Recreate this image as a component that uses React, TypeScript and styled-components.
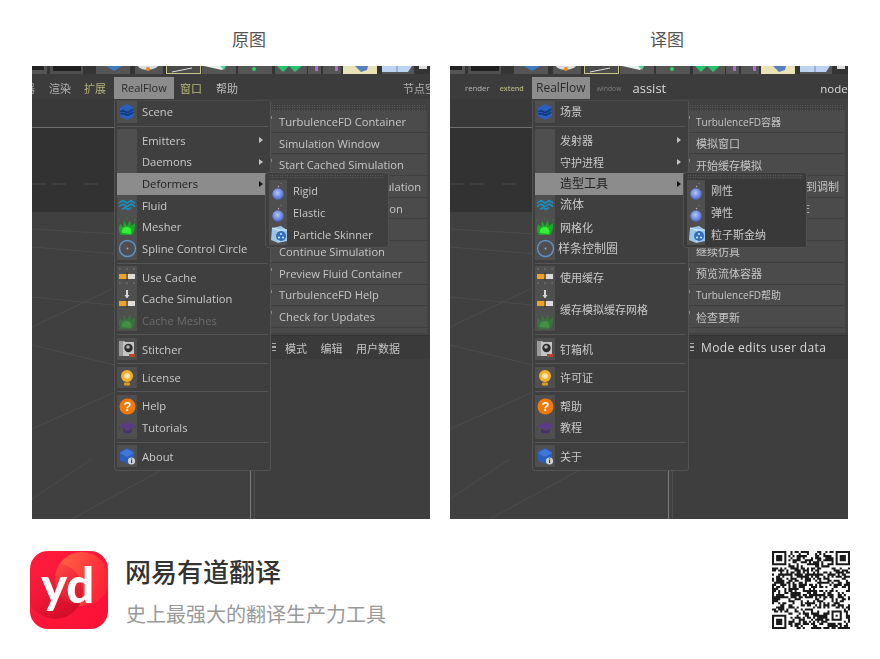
import React from "react";
import styled, { createGlobalStyle } from "styled-components";

const Global = createGlobalStyle`
  html, body { margin: 0; padding: 0; background: #fff; }
  body { font-family: "Noto Sans CJK SC", "Noto Sans", sans-serif; }
`;

const MENU_FONT = `"Open Sans", "Noto Sans CJK SC", sans-serif`;
const ROW = 21.7;

const Page = styled.div`
  width: 880px;
  height: 659px;
  overflow: hidden;
  background: #fff;
  position: relative;
`;
const Columns = styled.div`
  display: flex;
  gap: 20px;
  padding-left: 32px;
`;
const Column = styled.section`
  width: 398px;
`;
const Heading = styled.h2`
  margin: 0;
  height: 66px;
  padding: 27px 0 0 36px;
  box-sizing: border-box;
  text-align: center;
  font-size: 17px;
  line-height: 24px;
  font-weight: 400;
  color: #555;
`;
const Shot = styled.div<{ $blur: number }>`
  position: relative;
  width: 398px;
  height: 453px;
  overflow: hidden;
  background: #3c3c3c;
  display: flex;
  flex-direction: column;
  font-family: ${MENU_FONT};
  filter: blur(${(p) => p.$blur}px);
`;
const ToolStrip = styled.svg`
  display: block;
  flex: none;
  width: 398px;
  height: 8px;
`;
const MenuBar = styled.nav`
  flex: none;
  height: 25px;
  display: flex;
  align-items: center;
  padding-top: 3px;
  box-sizing: border-box;
  background: #3c3c3c;
  white-space: nowrap;
  position: relative;
`;
const BarItem = styled.span<{ $ml: number; $size: number; $color: string; $active?: boolean; $w?: number; $bold?: boolean }>`
  flex: none;
  margin-left: ${(p) => p.$ml}px;
  font-size: ${(p) => p.$size}px;
  color: ${(p) => p.$color};
  ${(p) => (p.$bold ? "font-weight:600;" : "")}
  ${(p) => (p.$w ? `width:${p.$w}px;` : "")}
  ${(p) =>
    p.$active
      ? `background:#8c8c8c;height:22px;line-height:22px;text-align:center;color:#2b2b2b;`
      : ""}
`;
const Workspace = styled.div`
  flex: 1;
  display: flex;
  min-height: 0;
`;
const Viewport = styled.svg`
  display: block;
  flex: none;
  width: 223px;
  height: 420px;
`;
const AttrPanel = styled.div`
  flex: 1;
  display: flex;
  flex-direction: column;
  background: #3e3e3e;
`;
const AttrTop = styled.div`
  flex: none;
  height: 236px;
  background: #424242;
`;
const AttrBar = styled.div<{ $size: number; $gap: number; $color: string; $pad: number; $track: number }>`
  flex: none;
  height: 23px;
  display: flex;
  align-items: center;
  gap: ${(p) => p.$gap}px;
  padding-left: ${(p) => p.$pad}px;
  border-top: 1px solid #333;
  background: #3a3a3a;
  font-size: ${(p) => p.$size}px;
  color: ${(p) => p.$color};
  position: relative;
  letter-spacing: ${(p) => p.$track}px;
  &::before {
    content: "";
    position: absolute;
    left: 17px;
    top: 7px;
    width: 4px;
    height: 9px;
    background: repeating-linear-gradient(#aaa 0 1.5px, transparent 1.5px 3.5px);
  }
`;
const MainMenu = styled.div`
  position: absolute;
  left: 82px;
  top: 34px;
  width: 157px;
  height: 371px;
  box-sizing: border-box;
  padding: 0 2px;
  background: #3f3f3f;
  border: 1px solid #535353;
  border-top-color: #4a4a4a;
  border-radius: 0 3px 3px 3px;
  z-index: 2;
`;
const Separator = styled.div`
  height: 6.8px;
  display: flex;
  align-items: center;
  &::before {
    content: "";
    flex: 1;
    height: 1px;
    background: #565656;
  }
`;
const Row = styled.div<{ $active?: boolean; $dim?: boolean; $tall?: boolean }>`
  display: flex;
  align-items: center;
  height: ${(p) => (p.$tall ? ROW * 2 : ROW)}px;
  background: ${(p) => (p.$active ? "#8c8c8c" : "transparent")};
  color: ${(p) => (p.$active ? "#1f1f1f" : p.$dim ? "#6c6c6c" : "#c9c9c9")};
  position: relative;
`;
const IconCell = styled.div<{ $w: number; $plain?: boolean }>`
  flex: none;
  width: ${(p) => p.$w}px;
  height: 100%;
  background: ${(p) => (p.$plain ? "transparent" : "#4f4f4f")};
  display: flex;
  flex-direction: column;
  align-items: center;
  justify-content: space-around;
`;
const Label = styled.span<{ $size: number; $indent: number }>`
  margin-left: ${(p) => p.$indent}px;
  font-size: ${(p) => p.$size}px;
  line-height: 1;
  white-space: nowrap;
`;
const Arrow = styled.i<{ $dark?: boolean }>`
  position: absolute;
  right: 5px;
  top: 8px;
  width: 0;
  height: 0;
  border-left: 4px solid ${(p) => (p.$dark ? "#111" : "#c4c4c4")};
  border-top: 3px solid transparent;
  border-bottom: 3px solid transparent;
`;
const ToolMenu = styled.div`
  position: absolute;
  left: 239px;
  top: 38px;
  width: 156px;
  height: 229px;
  z-index: 1;
  background: #4b4b4b;
  border-radius: 0 3px 0 0;
`;
const Grip = styled.div<{ $h: number; $mx: number }>`
  height: ${(p) => p.$h}px;
  padding: 0 ${(p) => p.$mx}px;
  box-sizing: border-box;
  background-color: #3f3f3f;
  background-image: radial-gradient(#6e6e6e 0.6px, transparent 0.8px);
  background-size: 2.5px 2.5px;
`;
const ToolRow = styled.div<{ $size: number; $tick: boolean; $pad: number }>`
  height: ${ROW}px;
  box-sizing: border-box;
  display: flex;
  align-items: center;
  padding-left: ${(p) => p.$pad}px;
  background: #4b4b4b;
  border-bottom: 1px solid #3f3f3f;
  color: #c6c6c6;
  font-size: ${(p) => p.$size}px;
  white-space: nowrap;
  position: relative;
  &::before {
    content: "";
    display: ${(p) => (p.$tick ? "block" : "none")};
    position: absolute;
    left: 0;
    top: 5px;
    width: 1px;
    height: 3px;
    background: #c27a3a;
  }
`;
const SideMenu = styled.div<{ $bg: string }>`
  position: absolute;
  left: 233px;
  top: 106px;
  width: 124px;
  height: 76px;
  box-sizing: border-box;
  padding: 1px 3px 0 3px;
  background: ${(p) => p.$bg};
  border: 1px solid #505050;
  border-radius: 3px;
  z-index: 3;
`;
const SideRows = styled.div`
  padding-top: 1px;
`;
const Footer = styled.footer`
  display: flex;
  align-items: flex-start;
  justify-content: space-between;
  padding: 32px 30px 0 30px;
`;
const Brand = styled.div`
  display: flex;
  align-items: flex-start;
  gap: 17px;
`;
const BrandText = styled.div`
  display: flex;
  flex-direction: column;
  gap: 13px;
  padding-top: 4px;
`;
const BrandTitle = styled.div`
  font-size: 26px;
  line-height: 32px;
  font-weight: 500;
  color: #333;
`;
const BrandSub = styled.div`
  font-size: 20px;
  line-height: 28px;
  color: #999;
  margin-left: 1px;
`;

/* ---------- icons ---------- */
const Ico = styled.svg`
  display: block;
  flex: none;
`;
const Hexa = ({ badge }: { badge?: boolean }) => (
  <Ico width="18" height="18" viewBox="0 0 18 18">
    <path d="M9 1 16 4.800v8.400L9 17 2 13.200V4.800z" fill="#2a5fc0" strokeLinejoin="round" />
    {badge ? (
      <>
        <path d="M2 6 9 10 16 6 9 2z" fill="#3f78d8" />
        <circle cx="13.500" cy="14" r="3.600" fill="#cfcfcf" />
        <rect x="13" y="12.800" width="1.100" height="3.200" fill="#444" />
        <rect x="13" y="11.400" width="1.100" height="1" fill="#444" />
      </>
    ) : (
      <path d="M2.500 9c3-3.500 5 .8 7 .5 2-.3 4-2.500 6-3.500M2.500 11.500c3-2.500 5 .7 7 .5 2-.2 4-2 6-3" stroke="#123a80" strokeWidth="1.800" fill="none" />
    )}
  </Ico>
);
const FluidIcon = () => (
  <Ico width="18" height="12" viewBox="0 0 18 12">
    <path d="M1 4 5 1.500 9 4l4-2.500L17 4M1 7.500 5 5l4 2.500L13 5l4 2.500M4 10.500l3-2 3 2 3-2" stroke="#1b8fbe" strokeWidth="1.700" fill="none" />
  </Ico>
);
const MesherIcon = ({ dim }: { dim?: boolean }) => (
  <Ico width="20" height="20" viewBox="0 0 20 20" opacity={dim ? 0.4 : 1}>
    <path d="M4 18c-3-4-2-8-1-11l3 3 1-6 3 5 3-6 1 6 4-3c0 5 0 9-3 12z" fill="#1aa827" />
    <path d="M5 16c-1-4 2-6 5-6s5 2 4 7z" fill="#35f03a" />
    <circle cx="2" cy="3.500" r="1" fill="#3f6e3f" />
    <circle cx="9.500" cy="1.500" r="1" fill="#3f6e3f" />
    <circle cx="18" cy="3" r="1" fill="#3f6e3f" />
  </Ico>
);
const SplineIcon = () => (
  <Ico width="19" height="19" viewBox="0 0 19 19">
    <circle cx="9.500" cy="9.500" r="8" fill="none" stroke="#5f93c9" strokeWidth="1.400" />
    <circle cx="9.500" cy="9.500" r="0.900" fill="#9db7d2" />
  </Ico>
);
const Slider = () => (
  <>
    <rect x="1" y="0" width="8" height="5" fill="#f0a224" />
    <rect x="9" y="0" width="8" height="5" fill="#dcdcdc" />
    <rect x="8.500" y="-1.500" width="1.200" height="8" fill="#333" />
  </>
);
const UseCacheIcon = () => (
  <Ico width="18" height="20" viewBox="0 0 18 20">
    <g fill="#8a8a8a">
      <circle cx="2" cy="2" r=".7" />
      <circle cx="9" cy="2" r=".7" />
      <circle cx="16" cy="2" r=".7" />
      <circle cx="2" cy="16" r=".7" />
      <circle cx="9" cy="16" r=".7" />
      <circle cx="16" cy="16" r=".7" />
    </g>
    <g transform="translate(0 7)">
      <Slider />
    </g>
  </Ico>
);
const CacheSimIcon = () => (
  <Ico width="18" height="20" viewBox="0 0 18 20">
    <path d="M8 1h2v5h1.500L9 9.500 6.500 6H8z" fill="#d8d8d8" />
    <g transform="translate(0 12)">
      <Slider />
    </g>
  </Ico>
);
const StitcherIcon = () => (
  <Ico width="18" height="18" viewBox="0 0 18 18">
    <rect x="1" y="1" width="6" height="15" fill="#9a9a9a" />
    <rect x="5" y="2" width="11" height="14" fill="#c4c4c4" />
    <circle cx="10.500" cy="8" r="4.200" fill="#2c2c2c" />
    <circle cx="10" cy="7" r="1.800" fill="#b5b5b5" />
    <rect x="11" y="14" width="6" height="3" fill="#b8452e" />
  </Ico>
);
const LicenseIcon = () => (
  <Ico width="16" height="18" viewBox="0 0 16 18">
    <circle cx="8" cy="7" r="6" fill="#f2b02a" />
    <circle cx="8" cy="7" r="2.800" fill="#fbe7b4" />
    <rect x="5" y="13.500" width="6" height="3" rx="1" fill="#e09c20" />
  </Ico>
);
const HelpGlyph = styled.text`
  font-family: "Liberation Sans", sans-serif;
  font-size: 13px;
  font-weight: 700;
  fill: #fff;
  text-anchor: middle;
`;
const HelpIcon = () => (
  <Ico width="17" height="17" viewBox="0 0 17 17">
    <circle cx="8.500" cy="8.500" r="8" fill="#ee7a0a" />
    <HelpGlyph x="8.500" y="13">?</HelpGlyph>
  </Ico>
);
const TutorialIcon = () => (
  <Ico width="19" height="13" viewBox="0 0 19 13">
    <path d="M9.500 1 18 5l-8.500 4L1 5z" fill="#5b3a86" />
    <path d="M5 7.500V11c2 1.800 7 1.800 9 0V7.500L9.500 10z" fill="#4a306e" />
    <path d="M1.500 5.500V10" stroke="#444" />
  </Ico>
);
const Sphere = ({ id }: { id: string }) => (
  <Ico width="16" height="20" viewBox="0 0 16 20">
    <defs>
      <radialGradient id={id} cx="0.45" cy="0.4" r="0.65">
        <stop offset="0" stopColor="#b4c8fa" />
        <stop offset="1" stopColor="#3f5fc8" />
      </radialGradient>
    </defs>
    <circle cx="8" cy="13" r="5.700" fill={`url(#${id})`} />
    <circle cx="8.500" cy="5.500" r=".7" fill="#b9b9b9" />
    <circle cx="11" cy="2.500" r=".6" fill="#8a8a8a" />
  </Ico>
);
const SkinnerIcon = () => (
  <Ico width="19" height="18" viewBox="0 0 19 18">
    <path d="M3 3 12 1l6 4v11l-9 2-7-3z" fill="#9cc6e6" />
    <path d="M3 3l7 2 8 0M10 5v12" stroke="#d6ecfa" fill="none" />
    <circle cx="12" cy="11" r="5" fill="#2f6fbe" />
    <circle cx="12" cy="9" r="1.100" fill="#cde4f5" />
    <circle cx="10" cy="12.500" r="1.100" fill="#cde4f5" />
    <circle cx="14" cy="12.500" r="1.100" fill="#cde4f5" />
  </Ico>
);

const ICONS: Record<string, React.ReactNode> = {
  scene: <Hexa />,
  fluid: <FluidIcon />,
  mesher: <MesherIcon />,
  spline: <SplineIcon />,
  useCache: <UseCacheIcon />,
  cacheSim: <CacheSimIcon />,
  cacheMesh: <MesherIcon dim />,
  stitcher: <StitcherIcon />,
  license: <LicenseIcon />,
  help: <HelpIcon />,
  tutorial: <TutorialIcon />,
  about: <Hexa badge />,
};

/* ---------- data ---------- */
type MainItem = {
  icons?: string[];
  label: string;
  size?: number;
  arrow?: boolean;
  active?: boolean;
  dim?: boolean;
  tall?: boolean;
  indent?: number;
};
type Sep = "sep";
type ToolItem = { label: string; size?: number };

const MAIN_EN: (MainItem | Sep)[] = [
  { icons: ["scene"], label: "Scene" },
  "sep",
  { label: "Emitters", arrow: true },
  { label: "Daemons", arrow: true },
  { label: "Deformers", arrow: true, active: true },
  { icons: ["fluid"], label: "Fluid" },
  { icons: ["mesher"], label: "Mesher" },
  { icons: ["spline"], label: "Spline Control Circle" },
  "sep",
  { icons: ["useCache"], label: "Use Cache" },
  { icons: ["cacheSim"], label: "Cache Simulation" },
  { icons: ["cacheMesh"], label: "Cache Meshes", dim: true },
  "sep",
  { icons: ["stitcher"], label: "Stitcher" },
  "sep",
  { icons: ["license"], label: "License" },
  "sep",
  { icons: ["help"], label: "Help" },
  { icons: ["tutorial"], label: "Tutorials" },
  "sep",
  { icons: ["about"], label: "About" },
];
const MAIN_ZH: (MainItem | Sep)[] = [
  { icons: ["scene"], label: "场景" },
  "sep",
  { label: "发射器", arrow: true },
  { label: "守护进程", arrow: true },
  { label: "造型工具", arrow: true, active: true, size: 12 },
  { icons: ["fluid"], label: "流体", size: 12 },
  { icons: ["mesher"], label: "网格化" },
  { icons: ["spline"], label: "样条控制圈", size: 12, indent: 3 },
  "sep",
  { icons: ["useCache"], label: "使用缓存" },
  { icons: ["cacheSim", "cacheMesh"], label: "缓存模拟缓存网格", tall: true },
  "sep",
  { icons: ["stitcher"], label: "钉箱机" },
  "sep",
  { icons: ["license"], label: "许可证" },
  "sep",
  { icons: ["help"], label: "帮助" },
  { icons: ["tutorial"], label: "教程" },
  "sep",
  { icons: ["about"], label: "关于" },
];
const TOOLS_EN: ToolItem[] = [
  { label: "TurbulenceFD Container" },
  { label: "Simulation Window" },
  { label: "Start Cached Simulation" },
  { label: "Resume Cached Simulation" },
  { label: "Stop Cached Simulation" },
  { label: "Pause Simulation" },
  { label: "Continue Simulation" },
  { label: "Preview Fluid Container" },
  { label: "TurbulenceFD Help" },
  { label: "Check for Updates" },
];
const TOOLS_ZH: ToolItem[] = [
  { label: "TurbulenceFD容器", size: 10 },
  { label: "模拟窗口" },
  { label: "开始缓存模拟" },
  { label: "继续缓存模拟继续缓存到调制" },
  { label: "停止缓存模拟停止缓存存在", size: 9.5 },
  { label: "暂停仿真" },
  { label: "继续仿真" },
  { label: "预览流体容器" },
  { label: "TurbulenceFD帮助", size: 10 },
  { label: "检查更新" },
];
const SIDE_EN = ["Rigid", "Elastic", "Particle Skinner"];
const SIDE_ZH = ["刚性", "弹性", "粒子斯金纳"];

/* ---------- drawings ---------- */
const ToolbarArt = () => (
  <ToolStrip viewBox="0 0 398 8">
    <rect width="398" height="8" fill="#343434" />
    <rect x="0" width="15" height="8" fill="#555" />
    <rect x="0" width="12" height="4" fill="#222" />
    <rect x="18" width="33" height="8" fill="#4f4f4f" />
    <rect x="21" width="28" height="5" fill="#1f1f1f" />
    <rect x="64" width="34" height="8" fill="#555" />
    <path d="M74 0h16l-8 5z" fill="#3f7cc8" />
    <rect x="103" width="28" height="8" fill="#555" />
    <path d="M106 0c2 5 16 5 20 0z" fill="#ddd" />
    <circle cx="116" cy="3" r="2" fill="#e88a20" />
    <rect x="134.500" y="-1" width="34" height="8.500" fill="#4a4a4a" stroke="#c9c48a" />
    <path d="M140 6l20-4" stroke="#ddd" />
    <rect x="170" width="34" height="8" fill="#555" />
    <path d="M172 0h22l-4 4z" fill="#e8f2ec" />
    <path d="M188 0h6l-2 4z" fill="#4fd49a" />
    <rect x="206" width="34" height="8" fill="#555" />
    <circle cx="222" cy="3" r="2" fill="#2fd06a" />
    <rect x="243" width="32" height="8" fill="#555" />
    <path d="M245 0l6 6 6-6 6 6 7-6z" fill="#27c26a" />
    <rect x="276" width="13" height="8" fill="#555" />
    <rect x="283" width="3" height="5" fill="#b06ad0" />
    <rect x="291" width="18" height="8" fill="#555" />
    <rect x="303" width="3" height="5" fill="#b06ad0" />
    <rect x="311" width="34" height="8" fill="#e8e2b4" />
    <path d="M323 0h13l-1 4-6 2z" fill="#5a7fc0" />
    <rect x="350" width="32" height="8" fill="#555" />
    <path d="M350 0h30l-4 6h-26z" fill="#bcd4f2" />
    <path d="M365 0v6" stroke="#6f8fb5" />
    <rect x="385" width="13" height="8" fill="#333" />
    <rect x="387" width="8" height="3" fill="#ddd" />
  </ToolStrip>
);
const ViewportArt = () => (
  <Viewport viewBox="0 0 223 420">
    <rect width="223" height="28" fill="#393939" />
    <rect y="28" width="223" height="85" fill="#323232" />
    <rect y="28" width="223" height="1" fill="#6e6e6e" />
    <rect y="113" width="223" height="307" fill="#404040" />
    <path d="M0 85h14M20 85h14M52 85h14" stroke="#4a4a4a" />
    <g stroke="#4c4c4c" fill="none">
      <path d="M0 130 223 143M0 148 223 166M0 198 223 220M0 246 223 300" />
      <path d="M0 228 80 190M0 330 90 290M40 420 223 320M0 400 60 360" />
    </g>
    <path d="M218.500 372V420" stroke="#7c7c7c" />
    <path d="M222.500 372V420" stroke="#4e4e4e" />
  </Viewport>
);
const LogoMark = styled.text`
  font-family: "Lato", "Open Sans", sans-serif;
  font-weight: 900;
  font-size: 49px;
  letter-spacing: 0;
  fill: #fff;
`;
const Logo = () => (
  <Ico width="78" height="78" viewBox="0 0 78 78">
    <defs>
      <linearGradient id="lg-base" x1="0" y1="0" x2="1" y2="1">
        <stop offset="0" stopColor="#ff1c3c" />
        <stop offset="1" stopColor="#fb1036" />
      </linearGradient>
      <linearGradient id="lg-top" x1="0" y1="0" x2="1" y2="0.4">
        <stop offset="0" stopColor="#ff6a48" />
        <stop offset="1" stopColor="#ff2436" />
      </linearGradient>
      <linearGradient id="lg-low" x1="0.2" y1="0" x2="0.8" y2="1">
        <stop offset="0" stopColor="#ff2040" stopOpacity="0.2" />
        <stop offset="1" stopColor="#c80c24" />
      </linearGradient>
      <clipPath id="lg-clip">
        <rect width="78" height="78" rx="18" />
      </clipPath>
    </defs>
    <g clipPath="url(#lg-clip)">
      <rect width="78" height="78" fill="url(#lg-base)" />
      <circle cx="52" cy="28" r="27" fill="url(#lg-top)" />
      <circle cx="25" cy="40" r="28" fill="url(#lg-low)" />
    </g>
    <LogoMark x="11" y="52">yd</LogoMark>
  </Ico>
);

const N = 38;
function qrPath(): string {
  let seed = 20210;
  const rnd = () => {
    seed = (seed * 1103515245 + 12345) & 0x7fffffff;
    return (seed >> 12) % 100;
  };
  const cell: boolean[][] = [];
  for (let y = 0; y < N; y++) {
    cell.push([]);
    for (let x = 0; x < N; x++) cell[y].push(rnd() < 52);
  }
  const finder = (ox: number, oy: number, size: number) => {
    for (let y = -1; y <= size; y++)
      for (let x = -1; x <= size; x++) {
        const px = ox + x;
        const py = oy + y;
        if (px < 0 || py < 0 || px >= N || py >= N) continue;
        const edge = x === 0 || y === 0 || x === size - 1 || y === size - 1;
        const out = x < 0 || y < 0 || x >= size || y >= size;
        const core = x >= 2 && y >= 2 && x <= size - 3 && y <= size - 3;
        cell[py][px] = !out && (edge || core);
      }
  };
  finder(0, 0, 7);
  finder(N - 7, 0, 7);
  finder(0, N - 7, 7);
  finder(N - 9, N - 9, 5);
  let d = "";
  for (let y = 0; y < N; y++)
    for (let x = 0; x < N; x++) if (cell[y][x]) d += `M${x} ${y}h1v1h-1z`;
  return d;
}
const QrCode = () => (
  <Ico width="78" height="78" viewBox={`0 0 ${N} ${N}`}>
    <path d={qrPath()} fill="#1a1a1a" />
  </Ico>
);

/* ---------- parts ---------- */
const MainRows = ({ items, size, indent }: { items: (MainItem | Sep)[]; size: number; indent: number }) => (
  <>
    {items.map((it, i) =>
      it === "sep" ? (
        <Separator key={i} />
      ) : (
        <Row key={i} $active={it.active} $dim={it.dim} $tall={it.tall}>
          <IconCell $w={20} $plain={it.active}>
            {it.icons?.map((n) => <React.Fragment key={n}>{ICONS[n]}</React.Fragment>)}
          </IconCell>
          <Label $size={it.size ?? size} $indent={it.indent ?? indent}>{it.label}</Label>
          {it.arrow && <Arrow $dark={it.active} />}
        </Row>
      )
    )}
  </>
);

const TICKS = [true, false, true, false, false, false, false, true, true, true];

const Tools = ({ rows, size, pad }: { rows: ToolItem[]; size: number; pad: number }) => (
  <ToolMenu>
    <Grip $h={7} $mx={2} />
    <div>
      {rows.map((t, i) => (
        <ToolRow key={t.label} $size={t.size ?? size} $tick={TICKS[i]} $pad={pad}>{t.label}</ToolRow>
      ))}
    </div>
  </ToolMenu>
);

const Side = ({ rows, bg, prefix, size }: { rows: string[]; bg: string; prefix: string; size: number }) => (
  <SideMenu $bg={bg}>
    <Grip $h={5} $mx={3} />
    <SideRows>
      {rows.map((t, i) => (
        <Row key={t}>
          <IconCell $w={18}>
            {i < 2 ? <Sphere id={`${prefix}-${i}`} /> : <SkinnerIcon />}
          </IconCell>
          <Label $size={size} $indent={6}>{t}</Label>
        </Row>
      ))}
    </SideRows>
  </SideMenu>
);

export default function App() {
  return (
    <Page>
      <Global />
      <Columns>
        <Column>
          <Heading>原图</Heading>
          <Shot $blur={0.35}>
            <ToolbarArt />
            <MenuBar>
              <BarItem $ml={-8} $size={11} $color="#a8a8a8">器</BarItem>
              <BarItem $ml={14} $size={11} $color="#b0b0b0">渲染</BarItem>
              <BarItem $ml={13} $size={11} $color="#b3b37a">扩展</BarItem>
              <BarItem $ml={8} $size={11} $color="#2b2b2b" $active $w={60}>RealFlow</BarItem>
              <BarItem $ml={6} $size={11} $color="#b9b978">窗口</BarItem>
              <BarItem $ml={14} $size={11} $color="#bdbdbd">帮助</BarItem>
              <BarItem $ml={165} $size={11} $color="#b0b0b0">节点空间</BarItem>
            </MenuBar>
            <Workspace>
              <ViewportArt />
              <AttrPanel>
                <AttrTop />
                <AttrBar $size={11} $gap={13.5} $color="#c4c4c4" $pad={30} $track={0}>
                  <span>模式</span>
                  <span>编辑</span>
                  <span>用户数据</span>
                </AttrBar>
              </AttrPanel>
            </Workspace>
            <Tools rows={TOOLS_EN} size={11.2} pad={8} />
            <MainMenu>
              <MainRows items={MAIN_EN} size={11.2} indent={5} />
            </MainMenu>
            <Side rows={SIDE_EN} bg="#3f3f3f" prefix="l" size={11} />
          </Shot>
        </Column>
        <Column>
          <Heading>译图</Heading>
          <Shot $blur={0.55}>
            <ToolbarArt />
            <MenuBar>
              <BarItem $ml={15} $size={7.8} $color="#b8b8b8">render</BarItem>
              <BarItem $ml={10} $size={7.2} $color="#b3b37a" $bold>extend</BarItem>
              <BarItem $ml={8} $size={12} $color="#2b2b2b" $active $w={58}>RealFlow</BarItem>
              <BarItem $ml={7} $size={6.8} $color="#7d7d7d">window</BarItem>
              <BarItem $ml={11} $size={13} $color="#d8d8d8">assist</BarItem>
              <BarItem $ml={154} $size={11.5} $color="#d8d8d8">node</BarItem>
            </MenuBar>
            <Workspace>
              <ViewportArt />
              <AttrPanel>
                <AttrTop />
                <AttrBar $size={12} $gap={0} $color="#d8d8d8" $pad={28} $track={0.35}>
                  <span>Mode edits user data</span>
                </AttrBar>
              </AttrPanel>
            </Workspace>
            <Tools rows={TOOLS_ZH} size={11} pad={7} />
            <MainMenu>
              <MainRows items={MAIN_ZH} size={11} indent={5} />
            </MainMenu>
            <Side rows={SIDE_ZH} bg="#393939" prefix="r" size={11} />
          </Shot>
        </Column>
      </Columns>
      <Footer>
        <Brand>
          <Logo />
          <BrandText>
            <BrandTitle>网易有道翻译</BrandTitle>
            <BrandSub>史上最强大的翻译生产力工具</BrandSub>
          </BrandText>
        </Brand>
        <QrCode />
      </Footer>
    </Page>
  );
}
